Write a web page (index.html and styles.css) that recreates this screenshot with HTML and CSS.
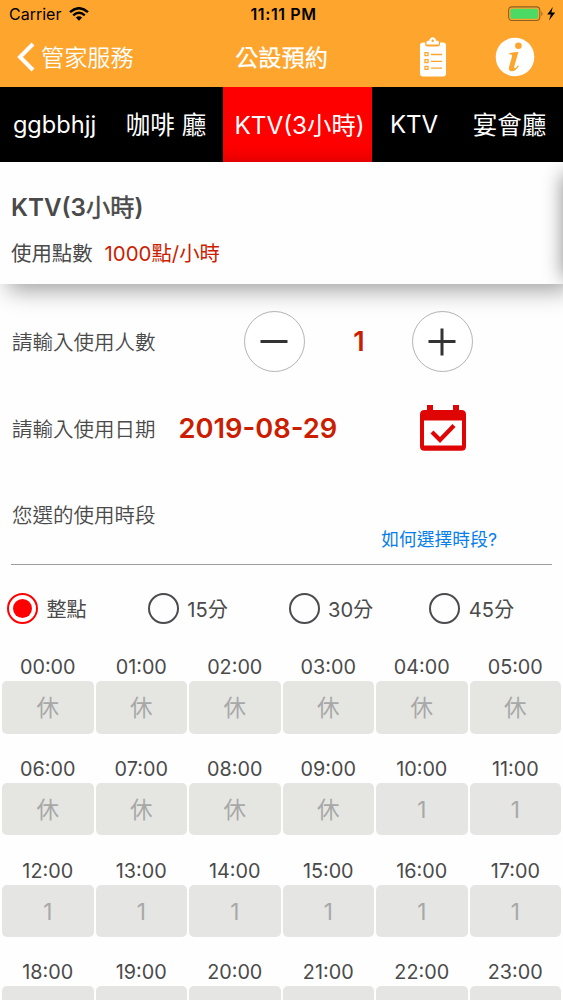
FILE: index.html
```html
<!DOCTYPE html>
<html lang="zh-Hant">
<head>
<meta charset="utf-8">
<title>公設預約</title>
<link rel="stylesheet" href="styles.css">
</head>
<body>
<div class="app">
  <header class="header">
    <div class="status">
      <div class="status-left">
        <span class="carrier">Carrier</span>
        <svg class="wifi" width="20" height="14" viewBox="0 0 20 14" fill="none" stroke="#000" stroke-width="2.4"><path d="M1 5.2Q10-2.8 19 5.2M4.2 8.4Q10 3.2 15.8 8.4"/><path d="M6.8 10.6Q10 8 13.2 10.6L10 13.8Z" fill="#000" stroke="none"/></svg>
      </div>
      <span class="clock">11:11 PM</span>
      <svg class="battery" width="50" height="16" viewBox="0 0 50 16"><rect x=".6" y=".9" width="31.2" height="13.6" rx="3.4" fill="none" stroke="#8e6123" stroke-width="1.1"/><rect x="2.4" y="2.7" width="27.6" height="10" rx="1.6" fill="#4cd964"/><path d="M33.4 5.2q2.2 2.5 0 5z" fill="#8e6123"/><path d="M44.8 1 39.2 8.6h3.6L41 14.4l6.2-7.8h-3.8z" fill="#000"/></svg>
    </div>
    <nav class="navbar">
      <a class="back">
        <svg width="18" height="30" viewBox="0 0 18 30" fill="none" stroke="#fff" stroke-width="4"><path d="M16 2 3 15 16 28"/></svg>
        <span class="back-label">管家服務</span>
      </a>
      <h1 class="page-title">公設預約</h1>
      <div class="actions">
        <svg width="28" height="40" viewBox="0 0 28 40"><path d="M4 5.5h2.2V7q0 2.5 2.5 2.5h9.6Q21 9.500 21 7V5.500h3q3 0 3 3v28q0 3-3 3H4q-3 0-3-3v-28q0-3 3-3Z" fill="#fff"/><path d="M7.500 7.600V5.200q0-1.400 1.500-1.400h1.200Q10.800.3 13.700.3t3.500 3.500h1.200q1.500 0 1.500 1.400v2.400Z" fill="#fff"/><circle cx="13.700" cy="3.700" r="1.200" fill="#fda52d"/><g fill="none" stroke="#fda52d" stroke-width="1.300"><path d="M6 15.700h3v3H6zM6 22.600h3v3H6zM6 29.400h3v3H6zM12 17.500h11M12 24.300h11M12 31.100h11"/></g></svg>
        <svg class="info" width="40" height="40" viewBox="0 0 40 40"><circle cx="20" cy="20" r="19.300" fill="#fff"/><circle cx="23.400" cy="8.700" r="3.300" fill="#fda52d"/><path d="M14.400 16.300q4.800-1.300 9-1.300l-4 14q-.6 2.300.3 2.300 1.200 0 3.300-3l.9.600q-3.300 5.300-7.100 5.300-3.800 0-2.600-4.600l2.700-9.500q.7-2.700-1-2.700l-1.800.1z" fill="#fda52d"/></svg>
      </div>
    </nav>
  </header>

  <nav class="tabs">
    <a class="tab tab-a">ggbbhjj</a>
    <a class="tab tab-b">咖啡 廳</a>
    <a class="tab tab-c active">KTV(3小時)</a>
    <a class="tab tab-d">KTV</a>
    <a class="tab tab-e">宴會廳</a>
  </nav>

  <div class="carousel">
    <section class="card">
      <h2 class="card-title">KTV(3<span class="medium">小時</span>)</h2>
      <p class="points"><span>使用點數</span><span class="price">1000點/小時</span></p>
    </section>
  </div>

  <main class="form">
    <div class="row">
      <span class="label">請輸入使用人數</span>
      <div class="stepper">
        <button class="round"><svg width="28" height="28" viewBox="0 0 28 28"><path d="M.5 13.500h27" stroke="#333" stroke-width="3"/></svg></button>
        <span class="count">1</span>
        <button class="round"><svg width="28" height="28" viewBox="0 0 28 28"><path d="M.5 13.500h27M14 .5v27" stroke="#333" stroke-width="3"/></svg></button>
      </div>
    </div>
    <div class="row date-row">
      <span class="label">請輸入使用日期</span>
      <span class="date">2019-08-29</span>
      <svg class="calendar" width="46" height="46" viewBox="0 0 46 46"><path fill="#e00505" fill-rule="evenodd" d="M7 0h6v5h20V0h6v5h2.500Q46 5 46 9.500v32q0 4.200-4.500 4.200h-37Q0 45.700 0 41.500v-32Q0 5 4.500 5H7ZM4 15.500v25h38v-25Z"/><path d="m12 27 8 8 14-14.500" fill="none" stroke="#e00505" stroke-width="4.200"/></svg>
    </div>
    <div class="period">
      <span class="label">您選的使用時段</span>
      <a class="help">如何選擇時段?</a>
    </div>
  </main>

  <div class="radios">
    <label class="radio checked"><i class="dot"></i><span>整點</span></label>
    <label class="radio"><i class="dot"></i><span>15分</span></label>
    <label class="radio"><i class="dot"></i><span>30分</span></label>
    <label class="radio"><i class="dot"></i><span>45分</span></label>
  </div>

  <div class="slots">
    <div class="slot"><time>00:00</time><b class="warm">休</b></div>
    <div class="slot"><time>01:00</time><b class="warm">休</b></div>
    <div class="slot"><time>02:00</time><b class="warm">休</b></div>
    <div class="slot"><time>03:00</time><b class="warm">休</b></div>
    <div class="slot"><time>04:00</time><b class="warm">休</b></div>
    <div class="slot"><time>05:00</time><b class="warm">休</b></div>
    <div class="slot"><time>06:00</time><b class="warm">休</b></div>
    <div class="slot"><time>07:00</time><b class="warm">休</b></div>
    <div class="slot"><time>08:00</time><b class="warm">休</b></div>
    <div class="slot"><time>09:00</time><b class="warm">休</b></div>
    <div class="slot"><time>10:00</time><b>1</b></div>
    <div class="slot"><time>11:00</time><b>1</b></div>
    <div class="slot"><time>12:00</time><b>1</b></div>
    <div class="slot"><time>13:00</time><b>1</b></div>
    <div class="slot"><time>14:00</time><b>1</b></div>
    <div class="slot"><time>15:00</time><b>1</b></div>
    <div class="slot"><time>16:00</time><b>1</b></div>
    <div class="slot"><time>17:00</time><b>1</b></div>
    <div class="slot"><time>18:00</time><b></b></div>
    <div class="slot"><time>19:00</time><b></b></div>
    <div class="slot"><time>20:00</time><b></b></div>
    <div class="slot"><time>21:00</time><b></b></div>
    <div class="slot"><time>22:00</time><b></b></div>
    <div class="slot"><time>23:00</time><b></b></div>
  </div>
</div>
</body>
</html>
```

FILE: styles.css
```css
* { box-sizing: border-box; }
body {
  margin: 0;
  background: #fefefe;
  color: #4a4a4a;
  font-family: Inter, "Noto Sans CJK TC", sans-serif;
  font-weight: 400;
}
h1, h2, p { margin: 0; }
svg { display: block; flex: none; }
.app { height: 1000px; overflow: hidden; white-space: nowrap; }

.header { height: 87px; background: #fda52d; }
.status {
  height: 29px;
  display: grid;
  grid-template-columns: 1fr auto 1fr;
  align-items: center;
  padding: 0 5px 1px 9px;
  color: #000;
}
.status-left { display: flex; align-items: center; gap: 8px; }
.carrier { font-size: 16px; }
.clock { font-size: 16px; font-weight: 600; letter-spacing: .6px; }
.battery { justify-self: end; }
.navbar {
  height: 58px;
  display: grid;
  grid-template-columns: 1fr auto 1fr;
  align-items: center;
  padding: 0 28px 2px 17px;
  color: #fff;
}
.back { display: flex; align-items: center; gap: 6px; }
.back-label { font-size: 23.2px; font-weight: 350; padding-bottom: 2px; }
.page-title { padding: 0 0 2px 11px; font-size: 23.2px; font-weight: 400; -webkit-text-stroke: .25px #fff; }
.actions { display: flex; justify-content: flex-end; align-items: center; gap: 48px; }

.tabs { display: flex; height: 75px; background: #000; color: #fff; font-size: 24.5px; }
.tab { flex: none; display: flex; align-items: center; justify-content: center; padding-bottom: 2px; }
.tab-a { width: 109px; font-size: 23.6px; padding-bottom: 0; }
.tab-b { width: 114px; }
.tab-c { width: 149px; padding: 0 0 3px 4px; font-size: 24.3px; }
.tab-d { width: 84px; font-size: 24px; padding-bottom: 0; }
.tab-e { width: 107px; }
.active { background: #f00; }

.carousel { position: relative; height: 122px; }
.card { height: 122px; padding: 28px 11px 0; background: #fefefe; box-shadow: 8px 6px 22px rgba(0, 0, 0, .38); }
.carousel::after {
  content: "";
  position: absolute;
  left: 100%;
  top: 12px;
  width: 60px;
  height: 104px;
  box-shadow: 0 0 20px rgba(0, 0, 0, .45);
  clip-path: inset(-12px 0 -6px -30px);
}
.card-title { font-size: 24.2px; line-height: 36px; font-weight: 600; }
.medium { font-weight: 400; -webkit-text-stroke: .5px #4a4a4a; }
.points { display: flex; gap: 12px; margin-top: 13px; font-size: 20.4px; line-height: 30px; }
.price { color: #cb1d00; }

.form { padding: 14px 11px 0 12px; }
.label { font-size: 20.5px; font-weight: 350; padding-bottom: 2px; }
.row { display: flex; align-items: center; height: 87px; }
.stepper { display: flex; align-items: center; margin-left: 88px; }
.round {
  width: 61px; height: 61px; padding: 0;
  display: flex; align-items: center; justify-content: center;
  border: 1px solid #b4b4b8; border-radius: 50%; background: #fff;
}
.count { width: 107px; padding-left: 2px; text-align: center; font-size: 27px; font-weight: 600; color: #cb1d00; }
.date { width: 159px; margin-left: 23px; font-size: 27.3px; font-weight: 600; color: #cb1d00; }
.calendar { margin: -2px 0 0 82px; }
.period {
  display: flex; justify-content: space-between;
  height: 93px; padding: 27px 55px 0 1px; margin-left: -1px;
  border-bottom: 1px solid #9c9ca2;
}
.help { margin-top: 26px; font-size: 17.8px; color: #087eed; }

.radios { display: grid; grid-template-columns: repeat(4, 1fr); height: 87px; }
.radio { display: flex; align-items: center; gap: 8.5px; padding-left: 7px; font-size: 20.1px; }
.radio span { padding-bottom: 1px; }
.dot { width: 31px; height: 31px; border: 2px solid #4c4c50; border-radius: 50%; }
.checked .dot { border-color: #f00; padding: 4px; background: #f00 content-box; }

.slots { display: grid; grid-template-columns: repeat(6, 1fr); padding: 0 1px; }
.slot { height: 101.8px; display: flex; flex-direction: column; padding: 0 1px; }
.slot time { height: 29px; line-height: 31px; text-align: center; font-size: 19.8px; }
.slot b {
  height: 52.5px; line-height: 53px; text-align: center;
  font-size: 22.5px; font-weight: 400;
  border-radius: 5px; background: #e5e5e4; color: #a8a8a8;
}
.slot .warm { background: #e5e6e2; }
```
